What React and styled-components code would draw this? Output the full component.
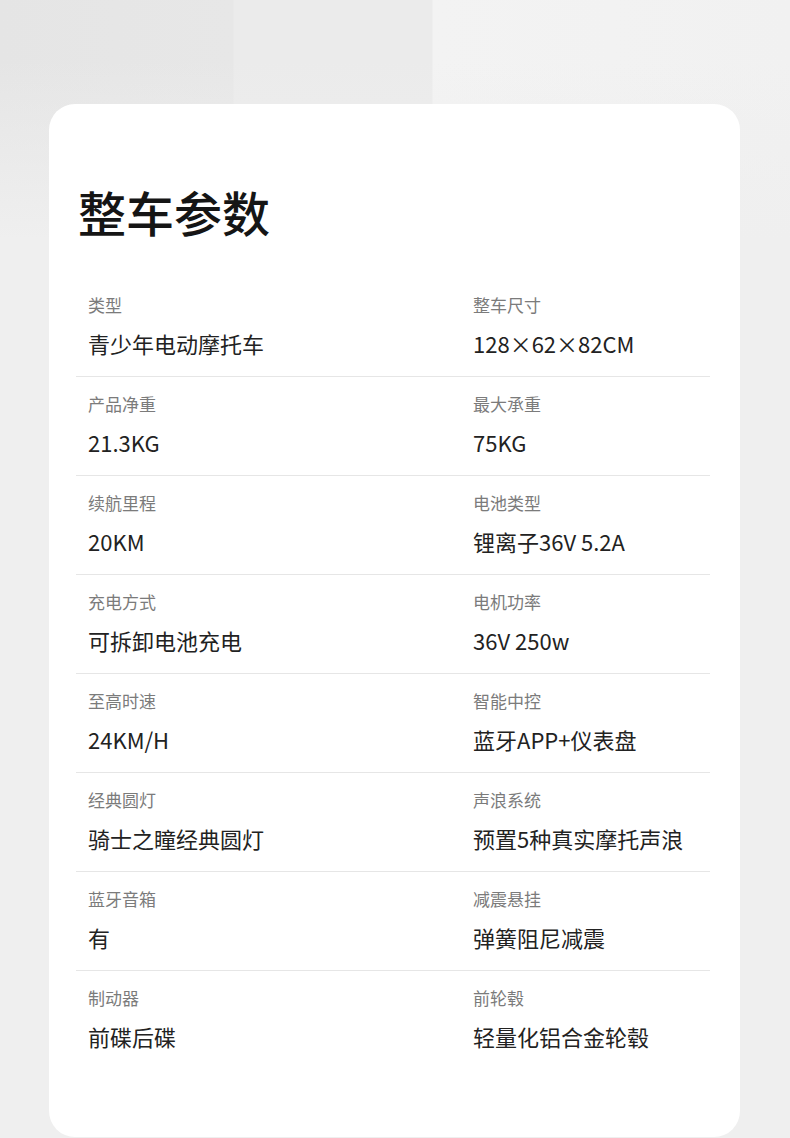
import React from "react";
import styled, { createGlobalStyle } from "styled-components";

const GlobalStyle = createGlobalStyle`
  html, body {
    margin: 0;
    padding: 0;
    background: #efefef;
  }
  body {
    font-family: "Noto Sans CJK SC", "Noto Sans", sans-serif;
    -webkit-font-smoothing: antialiased;
  }
`;

const Page = styled.div`
  box-sizing: border-box;
  width: 790px;
  height: 1138px;
  overflow: hidden;
  padding: 104px 50px 0 49px;
  background:
    linear-gradient(to bottom, rgba(239, 239, 239, 0) 0, rgba(239, 239, 239, 0) 60px, #efefef 240px),
    linear-gradient(
      to right,
      #e5e5e5 0,
      #e7e7e7 233px,
      #ebebeb 234px,
      #ebebeb 432px,
      #f3f3f3 433px,
      #f1f1f1 790px
    );
  background-repeat: no-repeat;
  background-size: 100% 300px, 100% 300px;
  background-color: #efefef;
`;

const Card = styled.section`
  box-sizing: border-box;
  width: 691px;
  height: 1033px;
  background: #ffffff;
  border-radius: 26px;
  padding: 79px 30px 0 27px;
`;

const Title = styled.h1`
  margin: 0 0 39px;
  padding-left: 2px;
  font-size: 48px;
  line-height: 56px;
  font-weight: 500;
  color: #151515;
  letter-spacing: 0;
`;

const List = styled.div`
  display: flex;
  flex-direction: column;
`;

const Row = styled.div`
  display: grid;
  grid-template-columns: 385px 1fr;
  border-bottom: 1px solid ${(p) => (p.$last ? "transparent" : "#e6e6e6")};
`;

const Cell = styled.div`
  display: flex;
  flex-direction: column;
  gap: 11px;
  padding: 15px 12px 18px;
`;

const Label = styled.div`
  font-size: 17px;
  line-height: 24px;
  color: #7b7b7b;
`;

const Value = styled.div`
  font-size: 22px;
  line-height: 30px;
  color: #222222;
`;

const rows = [
  [["类型", "青少年电动摩托车"], ["整车尺寸", "128×62×82CM"]],
  [["产品净重", "21.3KG"], ["最大承重", "75KG"]],
  [["续航里程", "20KM"], ["电池类型", "锂离子36V 5.2A"]],
  [["充电方式", "可拆卸电池充电"], ["电机功率", "36V 250w"]],
  [["至高时速", "24KM/H"], ["智能中控", "蓝牙APP+仪表盘"]],
  [["经典圆灯", "骑士之瞳经典圆灯"], ["声浪系统", "预置5种真实摩托声浪"]],
  [["蓝牙音箱", "有"], ["减震悬挂", "弹簧阻尼减震"]],
  [["制动器", "前碟后碟"], ["前轮毂", "轻量化铝合金轮毂"]],
];

export default function App() {
  return (
    <>
      <GlobalStyle />
      <Page>
        <Card>
          <Title>整车参数</Title>
          <List>
            {rows.map((row, i) => (
              <Row key={i} $last={i === rows.length - 1}>
                {row.map(([label, value]) => (
                  <Cell key={label}>
                    <Label>{label}</Label>
                    <Value>{value}</Value>
                  </Cell>
                ))}
              </Row>
            ))}
          </List>
        </Card>
      </Page>
    </>
  );
}
